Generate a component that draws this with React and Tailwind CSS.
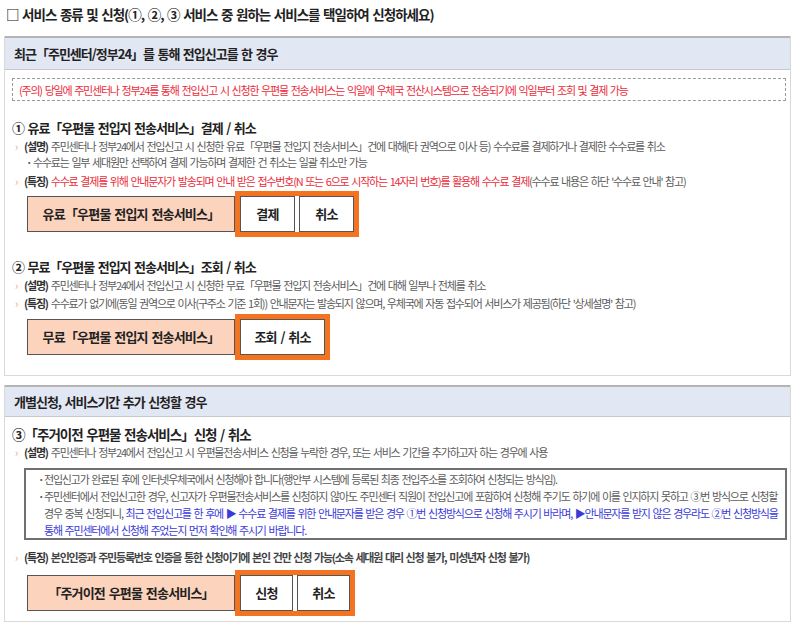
import React from 'react'

const body = "text-[11px] leading-[14px] tracking-[-1.2px] [word-spacing:1.5px] text-[#5b5b5b] whitespace-nowrap"

function Note({ label, children, strong, h = 'h-[14px]' }) {
  return (
    <div className={`flex items-center ${h} pl-[10px] ${body} ${strong ? 'font-semibold text-[#444]' : ''}`}>
      <span className="w-[9px] text-[#f0a060] font-normal">›</span>
      <span className="font-bold text-[#333]">({label})</span>
      <span className="ml-[3px]">{children}</span>
    </div>
  )
}

function ButtonRow({ label, buttons }) {
  return (
    <div className="flex items-center pl-[22px]">
      <div className="w-[208px] h-[36px] bg-[#fcd3bd] border border-[#555] flex items-center justify-center text-[13px] font-bold tracking-[-0.8px] [word-spacing:1.5px] text-[#222] whitespace-nowrap">
        {label}
      </div>
      <div className="flex gap-[4px] border-[5px] border-[#f37321] bg-white">
        {buttons.map(b => (
          <div
            key={b.text}
            className={`${b.w} h-[36px] border border-[#555] bg-white flex items-center justify-center text-[13px] font-bold tracking-[-0.8px] [word-spacing:1.5px] text-[#222] whitespace-nowrap`}
          >
            {b.text}
          </div>
        ))}
      </div>
    </div>
  )
}

function Heading({ children, big }) {
  return (
    <div className={`flex items-center pl-[7px] font-bold tracking-[-1px] [word-spacing:1.5px] text-[#222] whitespace-nowrap ${big ? 'h-[20px] text-[13.5px]' : 'h-[18px] text-[13px]'}`}>
      {children}
    </div>
  )
}

function BoxHeader({ children, h }) {
  return (
    <div className={`${h} border-t-2 border-t-[#b4b4b4] border-b border-b-[#c9c9c9] bg-[#e2e7f4] flex items-center pl-[9px] text-[13px] font-bold tracking-[-1px] [word-spacing:1.5px] text-[#222] whitespace-nowrap`}>
      {children}
    </div>
  )
}

export default function App() {
  return (
    <div className="w-[800px] h-[628px] bg-white overflow-hidden font-['Noto_Sans_CJK_KR','Noto_Sans',sans-serif]">
      {/* 제목 */}
      <div className="h-[28px] flex items-center pl-[6px] text-[13.5px] font-bold tracking-[-1px] [word-spacing:1.5px] text-[#222] whitespace-nowrap">
        □ 서비스 종류 및 신청(①, ②, ③ 서비스 중 원하는 서비스를 택일하여 신청하세요)
      </div>

      {/* 최근 전입신고 */}
      <div className="mt-[8px] ml-[4px] mr-[9px] border border-t-0 border-[#d9d9d9] pb-[15px]">
        <BoxHeader h="h-[34px]">최근「주민센터/정부24」를 통해 전입신고를 한 경우</BoxHeader>

        <div className={`mt-[8px] ml-[7px] mr-[4px] h-[23px] border border-dashed border-[#9a9a9a] flex items-center pl-[6px] ${body} text-[#ec2b3a]`}>
          (주의) 당일에 주민센터나 정부24를 통해 전입신고 시 신청한 우편물 전송서비스는 익일에 우체국 전산시스템으로 전송되기에 익일부터 조회 및 결제 가능
        </div>

        <div className="mt-[18px]">
          <Heading>① 유료「우편물 전입지 전송서비스」결제 / 취소</Heading>
        </div>
        <div className="mt-[1px]">
          <Note label="설명" h="h-[16px]">주민센터나 정부24에서 전입신고 시 신청한 유료「우편물 전입지 전송서비스」건에 대해(타 권역으로 이사 등) 수수료를 결제하거나 결제한 수수료를 취소</Note>
        </div>
        <div className={`flex items-center h-[16px] pl-[21px] ${body}`}>
          <span className="w-[7px] font-bold">·</span>
          <span>수수료는 일부 세대원만 선택하여 결제 가능하며 결제한 건 취소는 일괄 취소만 가능</span>
        </div>
        <div className="mt-[4px]">
          <Note label="특징">
            <span className="text-[#ec2b3a]">수수료 결제를 위해 안내문자가 발송되며 안내 받은 접수번호(N 또는 6으로 시작하는 14자리 번호)를 활용해 수수료 결제</span>
            (수수료 내용은 하단 '수수료 안내' 참고)
          </Note>
        </div>
        <div className="mt-[3px]">
          <ButtonRow
            label="유료「우편물 전입지 전송서비스」"
            buttons={[{ text: '결제', w: 'w-[55px]' }, { text: '취소', w: 'w-[55px]' }]}
          />
        </div>

        <div className="mt-[21px]">
          <Heading>② 무료「우편물 전입지 전송서비스」조회 / 취소</Heading>
        </div>
        <div className="mt-[2px]">
          <Note label="설명">주민센터나 정부24에서 전입신고 시 신청한 무료「우편물 전입지 전송서비스」건에 대해 일부나 전체를 취소</Note>
        </div>
        <div className="mt-[4px]">
          <Note label="특징">수수료가 없기에(동일 권역으로 이사(구주소 기준 1회)) 안내문자는 발송되지 않으며, 우체국에 자동 접수되어 서비스가 제공됨(하단 '상세설명' 참고)</Note>
        </div>
        <div className="mt-[4px]">
          <ButtonRow
            label="무료「우편물 전입지 전송서비스」"
            buttons={[{ text: '조회 / 취소', w: 'w-[85px]' }]}
          />
        </div>
      </div>

      {/* 개별신청 */}
      <div className="mt-[9px] ml-[4px] mr-[9px] border border-t-0 border-[#d9d9d9] pb-[5px]">
        <BoxHeader h="h-[32px]">개별신청, 서비스기간 추가 신청할 경우</BoxHeader>

        <div className="mt-[7px]">
          <Heading big>③「주거이전 우편물 전송서비스」신청 / 취소</Heading>
        </div>
        <div className="mt-[1px]">
          <Note label="설명">주민센터나 정부24에서 전입신고 시 우편물전송서비스 신청을 누락한 경우, 또는 서비스 기간을 추가하고자 하는 경우에 사용</Note>
        </div>

        <div className={`mt-[9px] ml-[19px] mr-[3px] border-2 border-[#707070] ${body}`}>
          <div className="flex items-center h-[17px] pl-[12px]">
            <span className="w-[6px] font-bold">·</span>
            <span>전입신고가 완료된 후에 인터넷우체국에서 신청해야 합니다(행안부 시스템에 등록된 최종 전입주소를 조회하여 신청되는 방식임).</span>
          </div>
          <div className="flex items-center h-[17px] pl-[12px]">
            <span className="w-[6px] font-bold">·</span>
            <span>주민센터에서 전입신고한 경우, 신고자가 우편물전송서비스를 신청하지 않아도 주민센터 직원이 전입신고에 포함하여 신청해 주기도 하기에 이를 인지하지 못하고 ③번 방식으로 신청할</span>
          </div>
          <div className="flex items-center h-[17px] pl-[18px]">
            <span>경우 중복 신청되니,&nbsp;</span>
            <span className="text-[#3a3ad8]">최근 전입신고를 한 후에 ▶ 수수료 결제를 위한 안내문자를 받은 경우 ①번 신청방식으로 신청해 주시기 바라며, ▶안내문자를 받지 않은 경우라도 ②번 신청방식을</span>
          </div>
          <div className="flex items-center h-[17px] pl-[18px]">
            <span className="text-[#3a3ad8]">통해 주민센터에서 신청해 주었는지 먼저 확인해 주시기 바랍니다.</span>
          </div>
        </div>

        <div className="mt-[10px]">
          <Note label="특징" strong>본인인증과 주민등록번호 인증을 통한 신청이기에 본인 건만 신청 가능(소속 세대원 대리 신청 불가, 미성년자 신청 불가)</Note>
        </div>
        <div className="mt-[6px]">
          <ButtonRow
            label="「주거이전 우편물 전송서비스」"
            buttons={[{ text: '신청', w: 'w-[53px]' }, { text: '취소', w: 'w-[53px]' }]}
          />
        </div>
      </div>
    </div>
  )
}
